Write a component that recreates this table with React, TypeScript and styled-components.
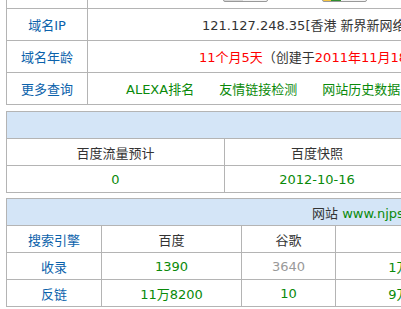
import React from 'react'
import styled, { createGlobalStyle } from 'styled-components'

const GlobalStyle = createGlobalStyle`
  body {
    margin: 0;
    background: #fff;
    overflow: hidden;
    font-family: "DejaVu Sans", "Noto Sans CJK SC", sans-serif;
    font-size: 13px;
    color: #333;
  }
`

const LINE = '#b4b4b4'
const GREEN = '#0a8a0a'

const Page = styled.div`
  display: flex;
  flex-direction: column;
  align-items: flex-start;
  padding-left: 6px;
  margin-top: -24px;
  width: 700px;
`

const Table = styled.div<{ $cols: string; $width: number; $gap?: number }>`
  display: grid;
  grid-template-columns: ${props => props.$cols};
  width: ${props => props.$width}px;
  border-top: 1px solid ${LINE};
  border-left: 1px solid ${LINE};
  margin-bottom: ${props => props.$gap || 0}px;
`

const Cell = styled.div<{ $h: number; $color?: string; $span?: boolean }>`
  display: flex;
  align-items: center;
  justify-content: center;
  height: ${props => props.$h}px;
  border-right: 1px solid ${LINE};
  border-bottom: 1px solid ${LINE};
  color: ${props => props.$color || '#333'};
  white-space: nowrap;
  overflow: hidden;
  ${props => (props.$span ? 'grid-column: 1 / -1;' : '')}
`

const Label = styled(Cell)`
  color: #0b62ab;
`

const ValueCell = styled(Cell)<{ $indent: number }>`
  justify-content: flex-start;
  padding-left: ${props => props.$indent}px;
`

const BadgeCell = styled(Cell)`
  justify-content: flex-start;
  align-items: flex-end;
  padding: 0 0 6px 135px;
  gap: 54px;
`

const Badge = styled.div<{ $accent?: boolean }>`
  flex-shrink: 0;
  width: 43px;
  height: 16px;
  border: 1px solid #999;
  border-radius: 2px;
  background: ${props =>
    props.$accent
      ? 'linear-gradient(90deg, #f5c542 0 8px, #2f8f2f 8px 18px, #f4f4f4 18px)'
      : 'linear-gradient(90deg, #d8d8d8 0 19px, #f4f4f4 19px)'};
`

const Header = styled(Cell)`
  background: #d4e5f7;
  justify-content: flex-start;
`

const HeaderText = styled.span`
  padding-left: 305px;
`

const Red = styled.span`
  color: #f00;
`

const Green = styled.span`
  color: ${GREEN};
`

const LinkRow = styled(ValueCell)`
  gap: 25px;
`

const Link = styled.span`
  color: ${GREEN};
`

function App() {
  return (
    <>
      <GlobalStyle />
      <Page>
        <Table $cols="81px 1fr" $width={540} $gap={6}>
          <Cell $h={31} />
          <BadgeCell $h={25}>
            <Badge />
            <Badge $accent />
          </BadgeCell>

          <Label $h={31}>{'域名IP'}</Label>
          <ValueCell $h={31} $indent={114}>
            {'121.127.248.35[香港 新界新网络]'}
          </ValueCell>

          <Label $h={31}>{'域名年龄'}</Label>
          <ValueCell $h={31} $indent={111}>
            <Red>{'11个月5天'}</Red>
            {'（创建于'}
            <Red>{'2011年11月18日'}</Red>
            {'）'}
          </ValueCell>

          <Label $h={31}>{'更多查询'}</Label>
          <LinkRow $h={31} $indent={38}>
            <Link>{'ALEXA排名'}</Link>
            <Link>{'友情链接检测'}</Link>
            <Link>{'网站历史数据'}</Link>
          </LinkRow>
        </Table>

        <Table $cols="218px 1fr" $width={403} $gap={5}>
          <Header $h={26} $span />
          <Cell $h={26}>{'百度流量预计'}</Cell>
          <Cell $h={26}>{'百度快照'}</Cell>
          <Cell $h={26} $color={GREEN}>{'0'}</Cell>
          <Cell $h={26} $color={GREEN}>{'2012-10-16'}</Cell>
        </Table>

        <Table $cols="95px 140px 94px 160px" $width={489}>
          <Header $h={26} $span>
            <HeaderText>
              {'网站 '}
              <Green>{'www.njpsy.com'}</Green>
              {' 收录情况'}
            </HeaderText>
          </Header>
          <Label $h={26}>{'搜索引擎'}</Label>
          <Cell $h={26}>{'百度'}</Cell>
          <Cell $h={26}>{'谷歌'}</Cell>
          <Cell $h={26}>{'搜搜'}</Cell>

          <Label $h={26}>{'收录'}</Label>
          <Cell $h={26} $color={GREEN}>{'1390'}</Cell>
          <Cell $h={26} $color="#999">{'3640'}</Cell>
          <Cell $h={26} $color={GREEN}>{'1万7200'}</Cell>

          <Label $h={26}>{'反链'}</Label>
          <Cell $h={26} $color={GREEN}>{'11万8200'}</Cell>
          <Cell $h={26} $color={GREEN}>{'10'}</Cell>
          <Cell $h={26} $color={GREEN}>{'9万3500'}</Cell>
        </Table>
      </Page>
    </>
  )
}

export default App
